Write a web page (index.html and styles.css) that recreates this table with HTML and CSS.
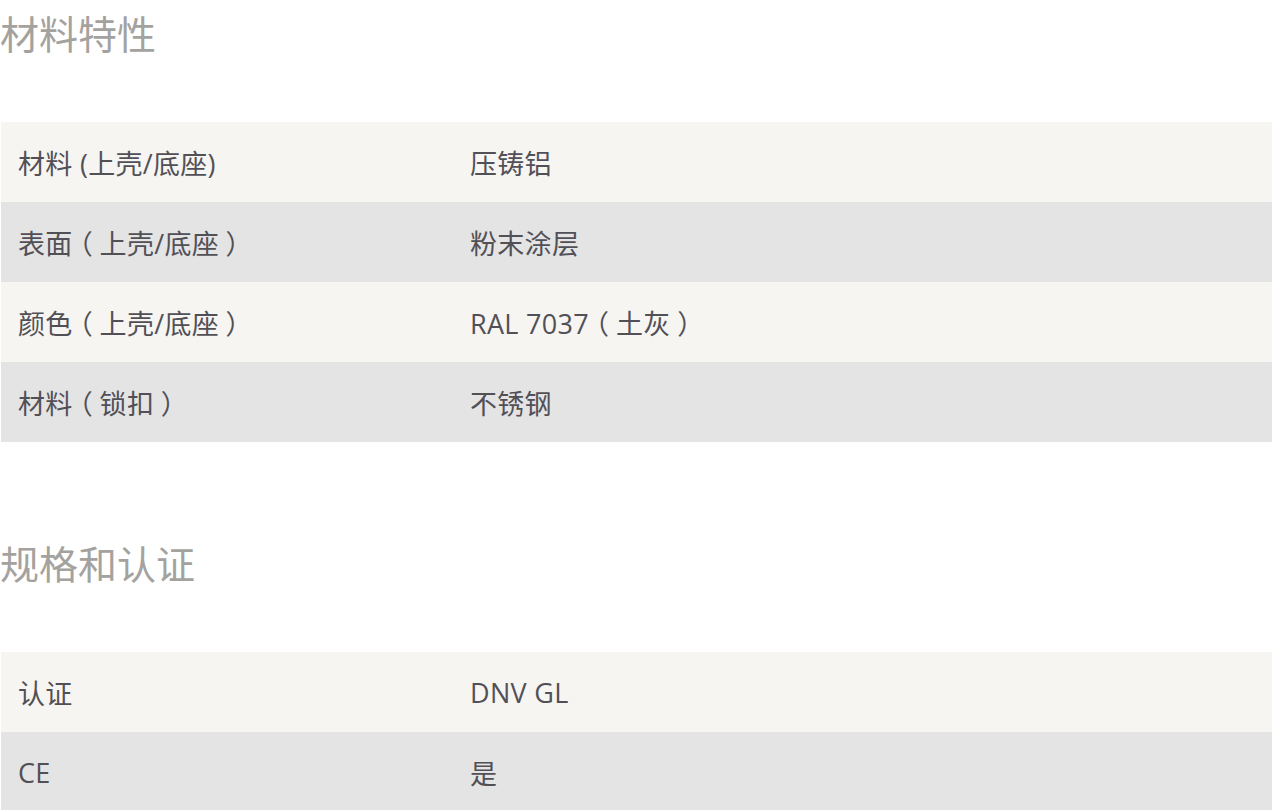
FILE: index.html
```html
<!DOCTYPE html>
<html lang="zh-CN">
<head>
<meta charset="utf-8">
<link rel="stylesheet" href="styles.css">
</head>
<body>
<section class="section">
  <h2 class="title">材料特性</h2>
  <table class="spec">
    <tr><td class="key">材料 (上壳/底座)</td><td class="val">压铸铝</td></tr>
    <tr><td class="key">表面<span class="fp">（</span>上壳/底座<span class="fp">）</span></td><td class="val">粉末涂层</td></tr>
    <tr><td class="key">颜色<span class="fp">（</span>上壳/底座<span class="fp">）</span></td><td class="val">RAL 7037<span class="fp">（</span>土灰<span class="fp">）</span></td></tr>
    <tr><td class="key">材料<span class="fp">（</span>锁扣<span class="fp">）</span></td><td class="val">不锈钢</td></tr>
  </table>
</section>
<section class="section">
  <h2 class="title">规格和认证</h2>
  <table class="spec">
    <tr><td class="key">认证</td><td class="val">DNV GL</td></tr>
    <tr><td class="key">CE</td><td class="val">是</td></tr>
  </table>
</section>
</body>
</html>
```
FILE: styles.css
```css
html, body {
  margin: 0;
  padding: 0;
  background: #ffffff;
}
body {
  font-family: "Open Sans", "Noto Sans CJK SC", sans-serif;
  color: #525057;
}
.section {
  padding-bottom: 88px;
}
.title {
  margin: 0;
  padding-top: 8px;
  height: 122px;
  box-sizing: border-box;
  font-family: "Noto Sans CJK SC", sans-serif;
  font-weight: 400;
  font-size: 39px;
  line-height: 48px;
  color: #a4a29e;
}
.spec {
  width: calc(100% - 1px);
  margin-left: 1px;
  border-collapse: collapse;
}
.spec tr:nth-child(odd) {
  background: #f6f5f1;
}
.spec tr:nth-child(even) {
  background: #e4e4e4;
}
.spec td {
  height: 80px;
  padding: 0 0 0 17px;
  font-size: 27px;
  letter-spacing: 0.3px;
  vertical-align: middle;
}
.spec .key {
  width: 435px;
}
.fp {
  display: inline-block;
  width: 1em;
  text-align: center;
  font-family: "Noto Sans CJK SC", sans-serif;
  font-feature-settings: "halt" 1;
}
```
